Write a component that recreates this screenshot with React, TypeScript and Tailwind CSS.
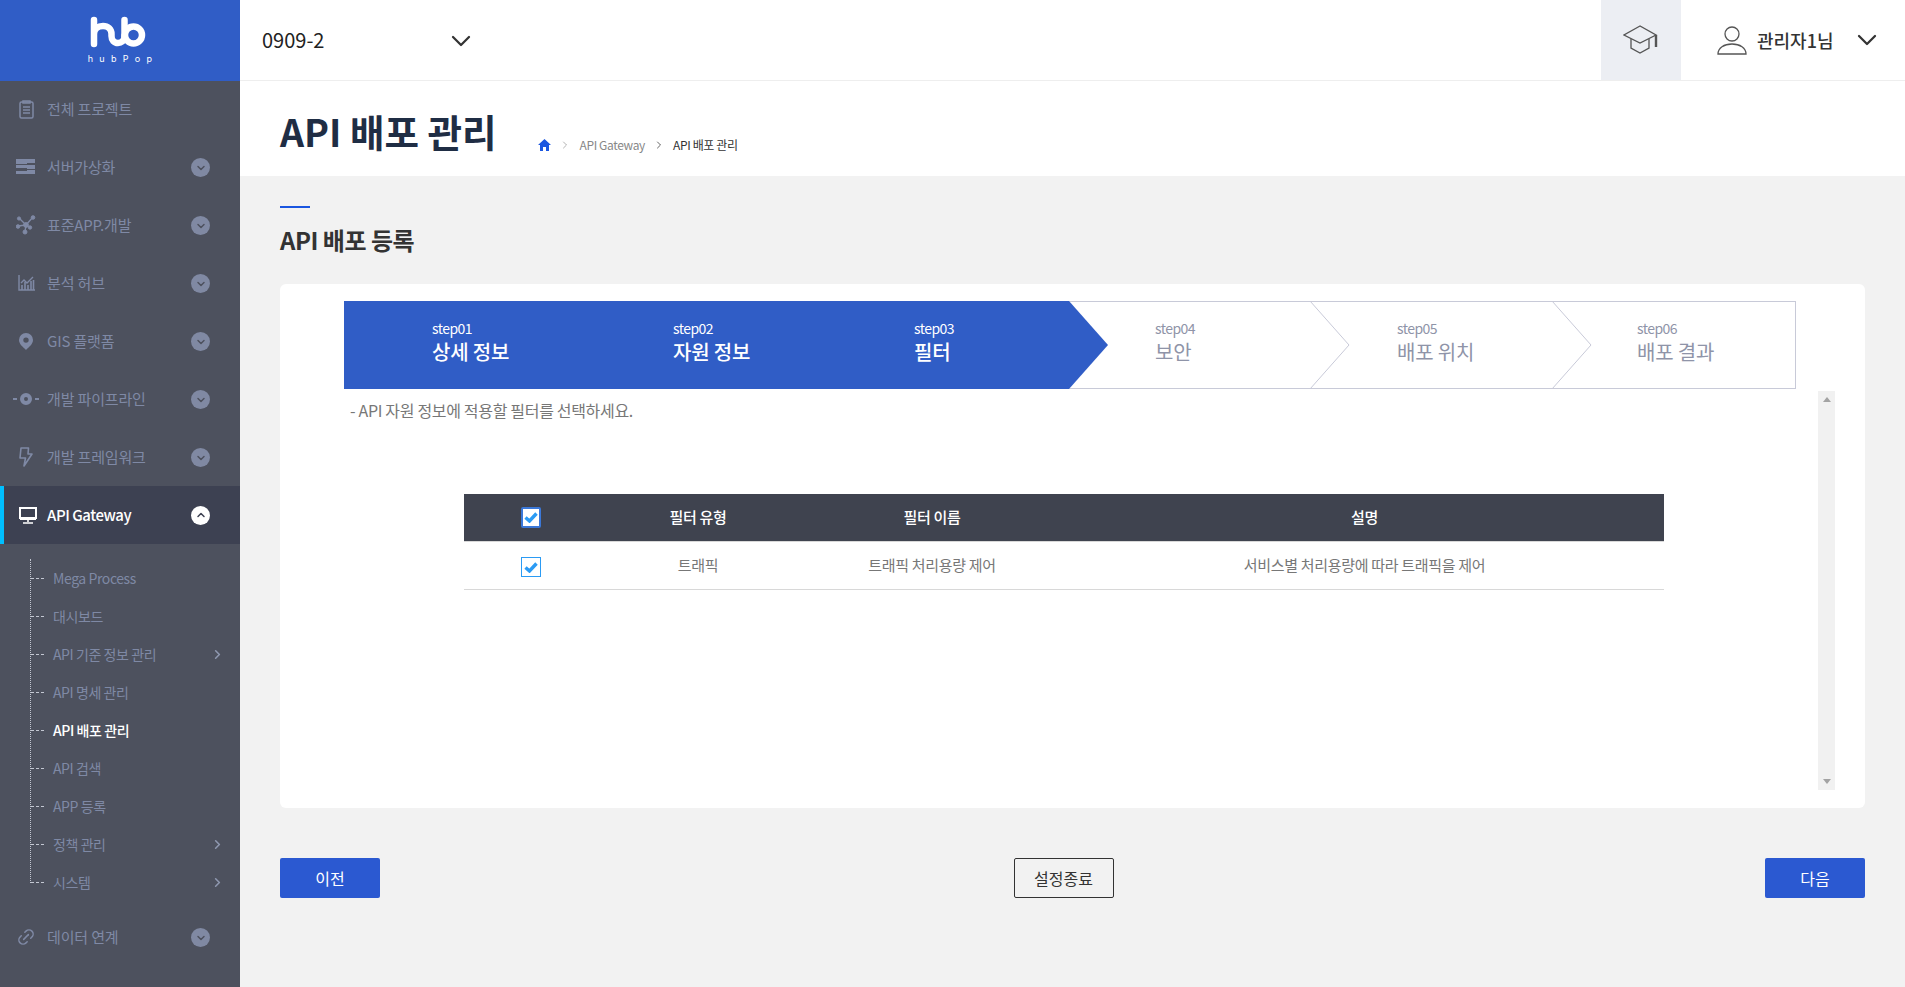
import { ChevronDown, ChevronRight, ChevronUp, Link2 } from 'lucide-react'
import type { ReactNode } from 'react'

const ClipboardIcon = () => (
  <svg width="15" height="19" viewBox="0 0 15 19" fill="none" stroke="currentColor" strokeWidth="1.5">
    <rect x="1" y="2" width="13" height="16" rx="1.5" />
    <path d="M4 1h7v2H4zM4 7h7M4 10h7M4 13h7" />
  </svg>
)

const ServerIcon = () => (
  <svg width="20" height="16" viewBox="0 0 20 16" fill="currentColor">
    <path d="M0 0h19v4H11v1H0zM0 6h19v4H11V9H0zM0 12h11v-1h8v4H0z" />
  </svg>
)

const NetworkIcon = () => (
  <svg width="20" height="20" viewBox="0 0 20 20" fill="currentColor" stroke="currentColor">
    <path d="M3 3l7 7M17 2l-7 8M2 11l8-1 3 2M10 10l-1 7" strokeWidth="1.4" fill="none" />
    <circle cx="3" cy="3.5" r="1.6" />
    <circle cx="17" cy="2.5" r="1.8" />
    <circle cx="2" cy="11.5" r="1.8" />
    <circle cx="10" cy="10" r="2.4" />
    <circle cx="14" cy="12.5" r="1.7" />
    <circle cx="9" cy="17" r="2" />
  </svg>
)

const ChartIcon = () => (
  <svg width="17" height="16" viewBox="0 0 17 16" fill="none" stroke="currentColor" strokeWidth="1.4">
    <path d="M1 0v15h16" />
    <path d="M3 8l3-3 3 3 6-6" />
    <path d="M4 15V10M7 15V7M10 15V10M13 15V6M15.5 15V5" strokeWidth="1.6" />
  </svg>
)

const PinIcon = () => (
  <svg width="14" height="17" viewBox="0 0 14 17">
    <path fillRule="evenodd" fill="currentColor" d="M7 0a7 7 0 0 1 7 7c0 4-4 7-7 10-3-3-7-6-7-10a7 7 0 0 1 7-7zm0 4.4a2.7 2.7 0 1 0 0 5.4 2.7 2.7 0 0 0 0-5.4z" />
  </svg>
)

const PipeIcon = () => (
  <svg width="26" height="12" viewBox="0 0 26 12" fill="currentColor">
    <path d="M0 5h4v2H0zM22 5h4v2h-4z" />
    <path fillRule="evenodd" d="M13 0a6 6 0 1 1 0 12 6 6 0 0 1 0-12zm0 4a2 2 0 1 0 0 4 2 2 0 0 0 0-4z" />
  </svg>
)

const BoltIcon = () => (
  <svg width="14" height="20" viewBox="0 0 14 20" fill="none" stroke="currentColor" strokeWidth="1.6" strokeLinejoin="round">
    <path d="M2 1h7.5l-.5 6h4L5 19l1.5-8H1z" />
  </svg>
)

const MonitorIcon = () => (
  <svg width="18" height="17" viewBox="0 0 18 17" fill="none" stroke="currentColor" strokeWidth="2">
    <rect x="1" y="1" width="16" height="10" />
    <path d="M1 12h16" strokeWidth="2" />
    <path d="M9 12v3M4 16h10" strokeWidth="1.6" />
  </svg>
)

const menuTop: { label: string; icon: ReactNode; arrow?: boolean }[] = [
  { label: '전체 프로젝트', icon: <ClipboardIcon /> },
  { label: '서버가상화', icon: <ServerIcon />, arrow: true },
  { label: '표준APP.개발', icon: <NetworkIcon />, arrow: true },
  { label: '분석 허브', icon: <ChartIcon />, arrow: true },
  { label: 'GIS 플랫폼', icon: <PinIcon />, arrow: true },
  { label: '개발 파이프라인', icon: <PipeIcon />, arrow: true },
  { label: '개발 프레임워크', icon: <BoltIcon />, arrow: true },
]

const subMenu = [
  { label: 'Mega Process' },
  { label: '대시보드' },
  { label: 'API 기준 정보 관리', more: true },
  { label: 'API 명세 관리' },
  { label: 'API 배포 관리', active: true },
  { label: 'API 검색' },
  { label: 'APP 등록' },
  { label: '정책 관리', more: true },
  { label: '시스템', more: true },
]

const steps = [
  { no: 'step01', name: '상세 정보', cls: 'pl-[88px] bg-[#305dc6] text-white font-medium' },
  { no: 'step02', name: '자원 정보', cls: 'pl-[88px] bg-[#305dc6] text-white font-medium' },
  { no: 'step03', name: '필터', cls: 'pl-[88px] bg-[#305dc6] text-white font-medium' },
  { no: 'step04', name: '보안', cls: 'pl-[86px] text-[#8f94a8] border-y border-[#c8cad8]' },
  { no: 'step05', name: '배포 위치', cls: 'pl-[87px] text-[#8f94a8] border-y border-[#c8cad8]' },
  { no: 'step06', name: '배포 결과', cls: 'pl-[85px] text-[#8f94a8] border-y border-r border-[#c8cad8]' },
]

const MenuRow = ({ label, icon, arrow }: { label: string; icon: ReactNode; arrow?: boolean }) => (
  <div className="h-[58px] flex items-center text-[#7f89a5]">
    <div className="w-[47px] shrink-0 flex justify-center pl-[5px]">{icon}</div>
    <span className="text-[15px] leading-[20px] flex-1 whitespace-nowrap tracking-[-0.01em] -mt-px">{label}</span>
    {arrow && (
      <span className="w-[19px] h-[19px] rounded-full bg-[#8089a3] flex items-center justify-center mr-[30px] mt-px">
        <ChevronDown size={12} strokeWidth={3} className="text-[#4d515e]" />
      </span>
    )}
  </div>
)

const Check = ({ head }: { head?: boolean }) => (
  <span
    className={
      head
        ? 'inline-flex items-center justify-center w-[20px] h-[21px] bg-white border-2 border-[#3b78d8] rounded-[2px] align-middle -mt-[3px]'
        : 'inline-flex items-center justify-center w-[20px] h-[20px] bg-white border border-[#2b9bf4] align-middle mt-[4px]'
    }
  >
    <svg width="14" height="11" viewBox="0 0 14 11" fill="none" stroke="#2b9bf4" strokeWidth="3.4">
      <path d="M1.5 5.5l4 3.5 7-7.5" />
    </svg>
  </span>
)

const App = () => {
  return (
    <div className="flex h-screen w-full overflow-hidden bg-[#f2f2f2] font-['Noto_Sans_CJK_KR','Noto_Sans',sans-serif]">
      {/* Sidebar */}
      <aside className="w-[240px] shrink-0 bg-[#4d515e]">
        <div className="h-[81px] bg-[#305dc6] -mb-px flex flex-col items-center text-white">
          <svg width="80" height="40" viewBox="0 0 80 40" fill="none" stroke="white" strokeWidth="6.5" strokeLinecap="round" className="mt-[10px]">
            <path d="M14 10V34M14 24C14 19 18 16 23 16C28 16 31.5 19 31.5 24V26C31.5 30 34 33 38 33C41 33 44.5 31 44.5 26" />
            <path d="M44.5 10V26" />
            <circle cx="53.5" cy="25" r="8.5" />
          </svg>
          <span className="text-[9px] leading-[10px] tracking-[0.7em] pl-[6px] mt-[4px] font-['Inter',sans-serif]">hubPop</span>
        </div>
        {menuTop.map((m) => (
          <MenuRow key={m.label} {...m} />
        ))}
        <div className="h-[58px] flex items-center bg-[#3d4152] border-l-4 border-[#00bfff] text-white">
          <div className="w-[43px] shrink-0 flex justify-center pl-[5px]">
            <MonitorIcon />
          </div>
          <span className="text-[15px] leading-[20px] font-medium flex-1 tracking-[-0.03em]">API Gateway</span>
          <span className="w-[19px] h-[19px] rounded-full bg-white flex items-center justify-center mr-[30px]">
            <ChevronUp size={12} strokeWidth={3} className="text-[#3d4152]" />
          </span>
        </div>
        <ul className="h-[324px] mt-[15px] ml-[30px] border-l border-dotted border-[#c3c7d2]">
          {subMenu.map((s) => (
            <li key={s.label} className="h-[38px] flex items-center">
              <span className="w-[13px] border-t border-dashed border-[#c3c7d2] mr-[9px]" />
              <span className={s.active ? 'text-[14px] leading-[20px] flex-1 font-medium text-white tracking-[-0.03em]' : 'text-[14px] leading-[20px] flex-1 text-[#7f89a5] tracking-[-0.03em]'}>{s.label}</span>
              {s.more && <ChevronRight size={15} strokeWidth={2.5} className="text-[#8f98b0] mr-[15px]" />}
            </li>
          ))}
        </ul>
        <div className="mt-[25px]">
          <MenuRow label="데이터 연계" icon={<Link2 size={20} strokeWidth={1.8} className="-rotate-45" />} arrow />
        </div>
      </aside>

      {/* Main */}
      <main className="flex-1 min-w-0 flex flex-col">
        <header className="h-[81px] shrink-0 bg-white border-b border-[#eeeeee] flex items-stretch">
          <div className="w-[208px] ml-[22px] flex items-center justify-between">
            <span className="text-[20px] leading-[28px] text-[#222222] -mt-px">0909-2</span>
            <ChevronDown size={32} strokeWidth={1.7} className="text-[#333333] mt-[2px] -mr-[7px]" />
          </div>
          <div className="ml-auto w-[80px] bg-[#eceef3] flex items-center justify-center text-[#555555]">
            <svg width="36" height="30" viewBox="0 0 36 30" fill="none" stroke="currentColor" strokeWidth="1.3">
              <path d="M17 1L1 10l16 8 16-8z" />
              <path d="M8 14v9l9 5 9-5v-9" />
              <path d="M33 10v12" strokeWidth="2.4" />
            </svg>
          </div>
          <div className="w-[224px] flex items-center pl-[36px]">
            <svg width="30" height="29" viewBox="0 0 30 29" fill="none" stroke="#555555" strokeWidth="1.3" className="shrink-0">
              <circle cx="15" cy="8" r="7" />
              <path d="M1 28c0-6 6-10 14-10s14 4 14 10z" />
            </svg>
            <span className="text-[18px] leading-[26px] text-[#333333] ml-[10px] font-medium">관리자1님</span>
            <ChevronDown size={32} strokeWidth={1.7} className="text-[#333333] ml-[17px]" />
          </div>
        </header>

        <div className="h-[95px] shrink-0 bg-white pl-[40px] flex items-center">
          <h1 className="text-[37.5px] leading-[50px] font-bold text-[#1f2d44] mt-[4px]">API 배포 관리</h1>
          <nav className="ml-[42px] mt-[32px] flex items-center text-[12px] leading-[18px] tracking-[-0.03em]">
            <svg width="13" height="12" viewBox="0 0 13 12" fill="#1a56e0">
              <path d="M6.5 0L13 6h-2v6H8V8H5v4H2V6H0z" />
            </svg>
            <ChevronRight size={12} strokeWidth={1} className="text-[#666666] mx-[8px]" />
            <span className="text-[#888888]">API Gateway</span>
            <ChevronRight size={12} strokeWidth={1.5} className="text-[#333333] mx-[8px]" />
            <span className="text-[#333333]">API 배포 관리</span>
          </nav>
        </div>

        <div className="flex-1 px-[40px] pt-[30px]">
          <div className="w-[30px] h-[2px] bg-[#1a56e0]" />
          <h2 className="mt-[17px] text-[24px] leading-[30px] font-bold text-[#333333] tracking-[-0.02em]">API 배포 등록</h2>

          <section className="mt-[29px] h-[524px] bg-white rounded-[6px] pt-[17px] relative">
            <div className="ml-[64px] w-[1452px] h-[88px] grid grid-cols-[241px_241px_243px_241px_242px_244px] relative">
              {steps.map((s) => (
                <div key={s.no} className={`${s.cls} flex flex-col justify-center pb-[7px]`}>
                  <span className="text-[14px] leading-[20px] font-normal tracking-[-0.04em]">{s.no}</span>
                  <span className="text-[20px] leading-[28px] tracking-[-0.01em]">{s.name}</span>
                </div>
              ))}
              {/* step arrows */}
              <svg className="absolute left-[725px] top-0" width="40" height="88" viewBox="0 0 40 88">
                <path d="M0 0l39 44L0 88z" fill="#305dc6" />
              </svg>
              <svg className="absolute left-[966px] top-0" width="40" height="88" viewBox="0 0 40 88" fill="none" stroke="#c8cad8">
                <path d="M0 0l39 44L0 88" />
              </svg>
              <svg className="absolute left-[1208px] top-0" width="40" height="88" viewBox="0 0 40 88" fill="none" stroke="#c8cad8">
                <path d="M0 0l39 44L0 88" />
              </svg>
            </div>

            <div className="ml-[70px] mt-[9px] text-[16px] leading-[24px] text-[#777777] tracking-[-0.02em]">- API 자원 정보에 적용할 필터를 선택하세요.</div>

            <table className="ml-[184px] mt-[72px] w-[1200px] table-fixed border-collapse text-center">
              <thead>
                <tr className="h-[47px] bg-[#3f434f] text-white text-[15px] tracking-[-0.02em] border-b border-[#d8d8d8]">
                  <th className="w-[133px] font-medium"><Check head /></th>
                  <th className="w-[202px] font-medium">필터 유형</th>
                  <th className="w-[266px] font-medium">필터 이름</th>
                  <th className="font-medium">설명</th>
                </tr>
              </thead>
              <tbody>
                <tr className="h-[48px] text-[15px] tracking-[-0.02em] text-[#777777] border-b border-[#d8d8d8]">
                  <td><Check /></td>
                  <td>트래픽</td>
                  <td>트래픽 처리용량 제어</td>
                  <td>서비스별 처리용량에 따라 트래픽을 제어</td>
                </tr>
              </tbody>
            </table>

            {/* scrollbar */}
            <div className="absolute right-[30px] top-[107px] w-[17px] h-[399px] bg-[#f1f1f1] flex flex-col items-center justify-between py-[6px]">
              <span className="w-0 h-0 border-x-[4px] border-x-transparent border-b-[5px] border-b-[#a3a3a3]" />
              <span className="w-0 h-0 border-x-[4px] border-x-transparent border-t-[5px] border-t-[#a3a3a3]" />
            </div>
          </section>

          <div className="mt-[50px] flex justify-between text-[16px]">
            <button className="w-[100px] h-[40px] bg-[#2b59d1] text-white rounded-[2px]">이전</button>
            <button className="w-[100px] h-[40px] mr-[18px] border border-[#333333] text-[#333333] rounded-[2px]">설정종료</button>
            <button className="w-[100px] h-[40px] bg-[#2b59d1] text-white rounded-[2px]">다음</button>
          </div>
        </div>
      </main>
    </div>
  )
}

export default App
